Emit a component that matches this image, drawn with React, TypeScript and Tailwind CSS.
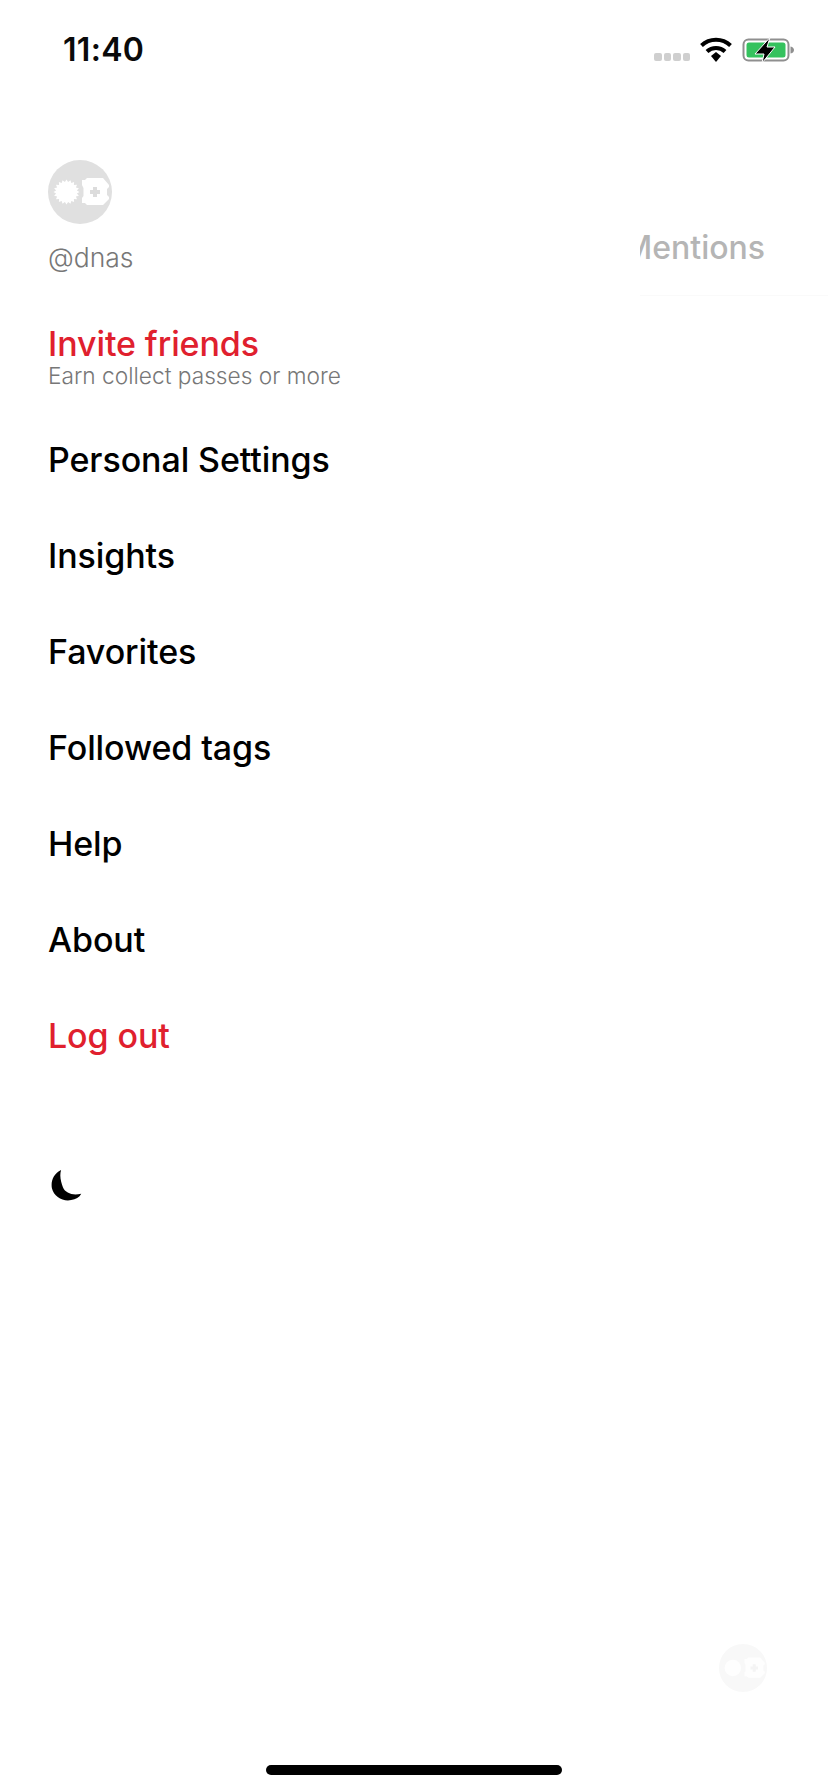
import React from 'react';

// rough spiky blob on the left of the logo
const blobPoints = Array.from({ length: 40 }, (_, i) => {
  const a = (i / 40) * Math.PI * 2;
  const r = i % 2 === 0 ? 13 : 10.5;
  return `${(18.5 + Math.cos(a) * r).toFixed(1)},${(32 + Math.sin(a) * r * 0.95).toFixed(1)}`;
}).join(' ');

const Logo = ({ faded }: { faded?: boolean }) => (
  <svg viewBox="0 0 64 64" className="w-full h-full">
    <circle cx="32" cy="32" r="32" fill={faded ? '#f8f8f8' : '#e0e0e0'} />
    {faded ? (
      <circle cx="18.500" cy="32" r="11" fill="#fefefe" />
    ) : (
      <polygon points={blobPoints} fill="#ffffff" />
    )}
    <path
      d="M39 18h16l6 7v2l-2 2v6l2 2v2l-6 6H39l-2-2h-3v-5l1.500-2v-8L34 25v-5h3z"
      fill={faded ? '#fefefe' : '#ffffff'}
    />
    <path d="M45 27h4v3h3v4h-3v3h-4v-3h-3v-4h3z" fill={faded ? '#f4f4f4' : '#dcdcdc'} />
  </svg>
);

const menu = ['Personal Settings', 'Insights', 'Favorites', 'Followed tags', 'Help', 'About'];

export default function App() {
  return (
    <div className="relative w-[828px] h-[1792px] overflow-hidden bg-white font-['Inter','Liberation_Sans',sans-serif] text-black">
      {/* status bar */}
      <div className="h-[100px] flex items-start justify-between pl-[63px] pr-[34px] pt-[30px]">
        <span className="text-[32px] leading-[40px] font-semibold tracking-[0.3px] text-[#0a0a0a]">11:40</span>
        <div className="flex items-start mt-[7px]">
          <div className="flex gap-[2px] mr-[10px] mt-[16px]">
            <span className="w-[7.500px] h-[8px] rounded-[2px] bg-[#cfcfcf]" />
            <span className="w-[7.500px] h-[8px] rounded-[2px] bg-[#cfcfcf]" />
            <span className="w-[7.500px] h-[8px] rounded-[2px] bg-[#cfcfcf]" />
            <span className="w-[7.500px] h-[8px] rounded-[2px] bg-[#cfcfcf]" />
          </div>
          <svg viewBox="0 0 32 25" className="w-[32px] h-[25px] mr-[10px]">
            <path d="M1.500 8.500a21 21 0 0 1 29 0" fill="none" stroke="#000" strokeWidth="4" />
            <path d="M7 14.500a13 13 0 0 1 18 0" fill="none" stroke="#000" strokeWidth="4" />
            <path d="M11 19l5-4 5 4-5 6z" fill="#000" />
          </svg>
          <svg viewBox="0 0 52 26" className="w-[52px] h-[26px]">
            <rect x="1.500" y="2.500" width="45" height="21" rx="5" fill="none" stroke="#8f8f8f" strokeWidth="2" />
            <rect x="4.500" y="5.500" width="39" height="15" rx="2.500" fill="#35c25e" />
            <path d="M48.500 9.500c2.500.5 3.500 2 3.500 3.500s-1 3-3.500 3.500z" fill="#8f8f8f" />
            <path d="M28 .5L13 17h9l-2 9 13-16h-8z" fill="#000" stroke="#fff" strokeWidth="1" />
          </svg>
        </div>
      </div>

      {/* drawer */}
      <div className="pl-[48px] pt-[60px]">
        <div className="w-[64px] h-[64px]">
          <Logo />
        </div>
        <div className="mt-[18px] text-[26.500px] leading-[30px] font-light text-[#777777]">@dnas</div>

        <div className="mt-[53px] h-[63px]">
          <div className="text-[34px] leading-[38px] font-medium tracking-[-0.1px] text-[#e0202e]">Invite friends</div>
          <div className="text-[22.700px] leading-[25px] font-light text-[#777777]">Earn collect passes or more</div>
        </div>

        <div className="mt-[23px]">
          {menu.map((item) => (
            <div key={item} className="h-[96px] flex items-center text-[34px] font-medium tracking-[-0.1px]">
              {item}
            </div>
          ))}
          <div className="h-[96px] flex items-center text-[34px] font-medium tracking-[-0.1px] text-[#e0202e]">Log out</div>
        </div>

        <svg viewBox="0 0 36 34" className="w-[33px] h-[31px] mt-[87px] ml-[3px]" preserveAspectRatio="none">
          <path d="M11 0C3 4-.5 12 1 20c2 9 12 15 21 13 5-1 9-3 11-7-9 2-17 0-20-7C11 13 9 7 11 0z" fill="#000" />
        </svg>
      </div>

      {/* feed peeking behind the drawer */}
      <div className="absolute left-[640px] top-[226px] w-[188px] h-[70px] border-b border-[#fafafa] overflow-hidden">
        <div className="ml-[-17px] text-[32px] leading-[43px] font-medium text-[#b5b5b5] whitespace-nowrap">Mentions</div>
      </div>

      <div className="absolute left-[719px] top-[1644px] w-[48px] h-[48px]">
        <Logo faded />
      </div>

      <div className="absolute left-[266px] top-[1765px] w-[296px] h-[10px] rounded-full bg-black" />
    </div>
  );
}
